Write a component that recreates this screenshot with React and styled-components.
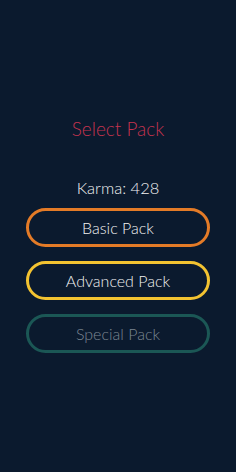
import React from 'react';
import styled, { createGlobalStyle } from 'styled-components';

const GlobalStyle = createGlobalStyle`
  html, body {
    margin: 0;
    padding: 0;
    background: #0b1a2e;
  }
`;

const packs = [
  { id: 'basic', label: 'Basic Pack', color: '#e47b27', text: '#f2f2f2' },
  { id: 'advanced', label: 'Advanced Pack', color: '#f3c331', text: '#f2f2f2' },
  { id: 'special', label: 'Special Pack', color: '#1b5755', text: '#7b8692' },
];

export default function App() {
  return (
    <>
      <GlobalStyle />
      <Screen>
        <Title>Select Pack</Title>
        <Karma>Karma: 428</Karma>
        <PackList>
          {packs.map((pack) => (
            <PackButton key={pack.id} $color={pack.color} $text={pack.text}>
              {pack.label}
            </PackButton>
          ))}
        </PackList>
      </Screen>
    </>
  );
}

const Screen = styled.div`
  width: 236px;
  height: 472px;
  box-sizing: border-box;
  padding-top: 115px;
  display: flex;
  flex-direction: column;
  align-items: center;
  background: #0b1a2e;
  font-family: Lato, 'Open Sans', sans-serif;
  font-weight: 300;
`;

const Title = styled.h1`
  margin: 0;
  font-size: 19px;
  font-weight: 300;
  line-height: 28px;
  color: #c4334f;
`;

const Karma = styled.div`
  margin-top: 33px;
  font-size: 16.5px;
  line-height: 24px;
  color: #f2f2f2;
`;

const PackList = styled.div`
  margin-top: 8px;
  display: flex;
  flex-direction: column;
  gap: 14px;
`;

const PackButton = styled.button`
  width: 184px;
  height: 39px;
  box-sizing: border-box;
  border: 3px solid ${({ $color }) => $color};
  border-radius: 20px;
  background: transparent;
  color: ${({ $text }) => $text};
  font-family: inherit;
  font-weight: 300;
  font-size: 16px;
  cursor: pointer;
`;
